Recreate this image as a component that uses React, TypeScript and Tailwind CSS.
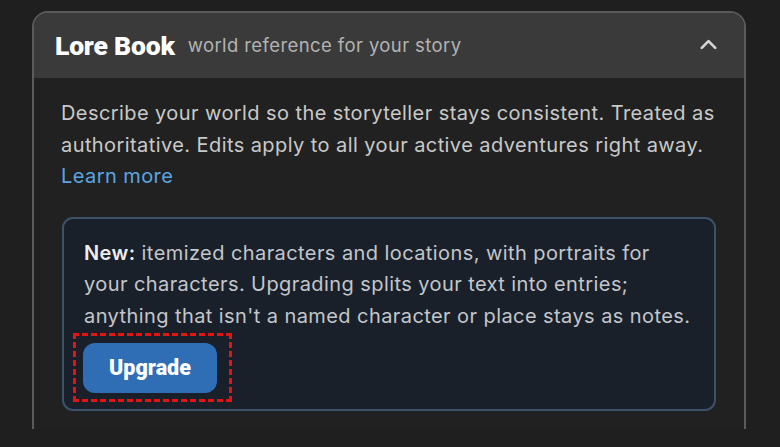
import { ChevronUp } from "lucide-react";

const App = () => {
  return (
    <div className="w-[780px] h-[447px] bg-[#1f1f1f] overflow-hidden font-['Inter',sans-serif]">
      <div className="ml-[32px] mt-[11px] w-[714px] h-[418px] rounded-t-[16px] border-2 border-b-0 border-[#5b5b5b] bg-[#212121] overflow-hidden">
        {/* header */}
        <div className="h-[65px] bg-[#3a3a3a] flex items-center pl-[21px] pr-[22px]">
          <span className="font-['Roboto',sans-serif] font-black text-[26.5px] text-white tracking-[-0.2px]">
            Lore Book
          </span>
          <span className="ml-[13px] mt-[1px] text-[18.5px] tracking-[0.4px] text-[#b3b3b3]">
            world reference for your story
          </span>
          <ChevronUp className="ml-auto -mt-[3px] text-[#d4d4d4]" size={27} strokeWidth={2.4} />
        </div>

        {/* body */}
        <div className="px-[28px] pt-[20px]">
          <p className="-ml-[1px] text-[20px] leading-[31.5px] tracking-[0.42px] text-[#c9c9c9]">
            Describe your world so the storyteller stays consistent. Treated as authoritative. Edits apply to all your
            active adventures right away.{" "}
            <a className="text-[#5ba5e3]">Learn more</a>
          </p>

          <div className="mt-[24px] rounded-[11px] border-2 border-[#3d5269] bg-[#19202a] pl-[20px] pr-[20px] pt-[19px] pb-[7px]">
            <p className="text-[20px] leading-[31.5px] tracking-[0.42px] text-[#c3c6ca]">
              <span className="font-semibold text-[#ececec]">New:</span> itemized characters and locations, with
              portraits for your characters. Upgrading splits your text into entries; anything that isn't a named
              character or place stays as notes.
            </p>
            <div className="mt-[1px] -ml-[11px] inline-block border-[3px] border-dashed border-[#e31414] pl-[7px] pr-[12px] pt-[7px] pb-[6px]">
              <button className="block w-[134px] h-[50px] rounded-[12px] bg-[#2f6db5] text-white font-['Roboto',sans-serif] font-black text-[21.5px]">
                Upgrade
              </button>
            </div>
          </div>
        </div>
      </div>
    </div>
  );
};

export default App;
